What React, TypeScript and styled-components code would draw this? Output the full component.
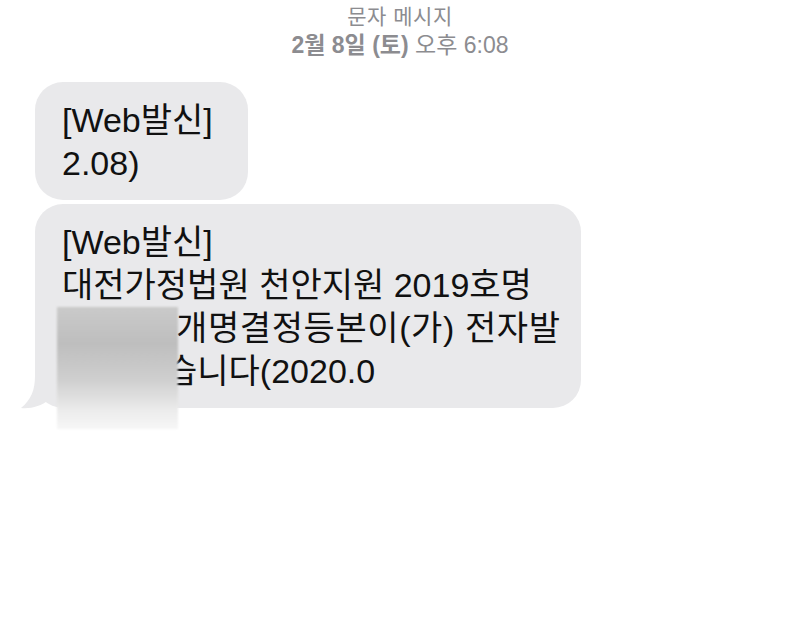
import React from "react";
import styled, { createGlobalStyle } from "styled-components";

const Global = createGlobalStyle`
  html, body { margin: 0; padding: 0; background: #ffffff; }
  body { font-family: "Liberation Sans", "Noto Sans CJK KR", sans-serif; }
`;

const Screen = styled.div`
  width: 800px;
  height: 636px;
  background: #ffffff;
  display: flex;
  flex-direction: column;
  overflow: hidden;
`;

const Header = styled.div`
  display: flex;
  flex-direction: column;
  align-items: center;
  padding-top: 2px;
  color: #8c8c90;
  font-size: 23px;
  line-height: 29px;
`;

const Title = styled.div`
  font-size: 21px;
  letter-spacing: 0.5px;
`;

const Strong = styled.span`
  font-weight: 700;
`;

const Thread = styled.div`
  display: flex;
  flex-direction: column;
  align-items: flex-start;
  gap: 4px;
  padding: 22px 0 0 35px;
`;

const Bubble = styled.div<{ $width: number }>`
  position: relative;
  box-sizing: border-box;
  width: ${(p) => p.$width}px;
  background: #e9e9eb;
  border-radius: 28px;
  padding: 17px 20px 15px 27px;
  color: #111111;
  font-size: 34px;
  line-height: 43px;
  white-space: pre;
`;

const Line = styled.div<{ $indent?: number; $spacing?: number }>`
  padding-left: ${(p) => p.$indent ?? 0}px;
  letter-spacing: ${(p) => p.$spacing ?? 0}px;
`;

const Tail = styled.svg`
  position: absolute;
  left: -14px;
  bottom: -2px;
  width: 40px;
  height: 34px;
`;

const Blur = styled.div`
  position: absolute;
  left: 22px;
  top: 103px;
  width: 121px;
  height: 122px;
  filter: blur(1px);
  background: linear-gradient(
    180deg,
    #cacaca 0%,
    #bebebe 30%,
    #cfcfcf 60%,
    #ececec 85%,
    #f7f7f7 100%
  );
`;

export default function App() {
  return (
    <>
      <Global />
      <Screen>
        <Header>
          <Title>문자 메시지</Title>
          <div>
            <Strong>2월 8일 (토)</Strong> 오후 6:08
          </div>
        </Header>
        <Thread>
          <Bubble $width={213}>
            <Line>[Web발신]</Line>
            <Line>2.08)</Line>
          </Bubble>
          <Bubble $width={546}>
            <Line>[Web발신]</Line>
            <Line>대전가정법원 천안지원 2019호명</Line>
            <Line $indent={114} $spacing={0.6}>개명결정등본이(가) 전자발</Line>
            <Line $indent={104}>습니다(2020.0</Line>
            <Tail viewBox="0 0 40 34">
              <path
                d="M14 0 C14 14 10 24 0 32 C10 33 20 30 28 24 L40 24 L40 0 Z"
                fill="#e9e9eb"
              />
            </Tail>
            <Blur />
          </Bubble>
        </Thread>
      </Screen>
    </>
  );
}
